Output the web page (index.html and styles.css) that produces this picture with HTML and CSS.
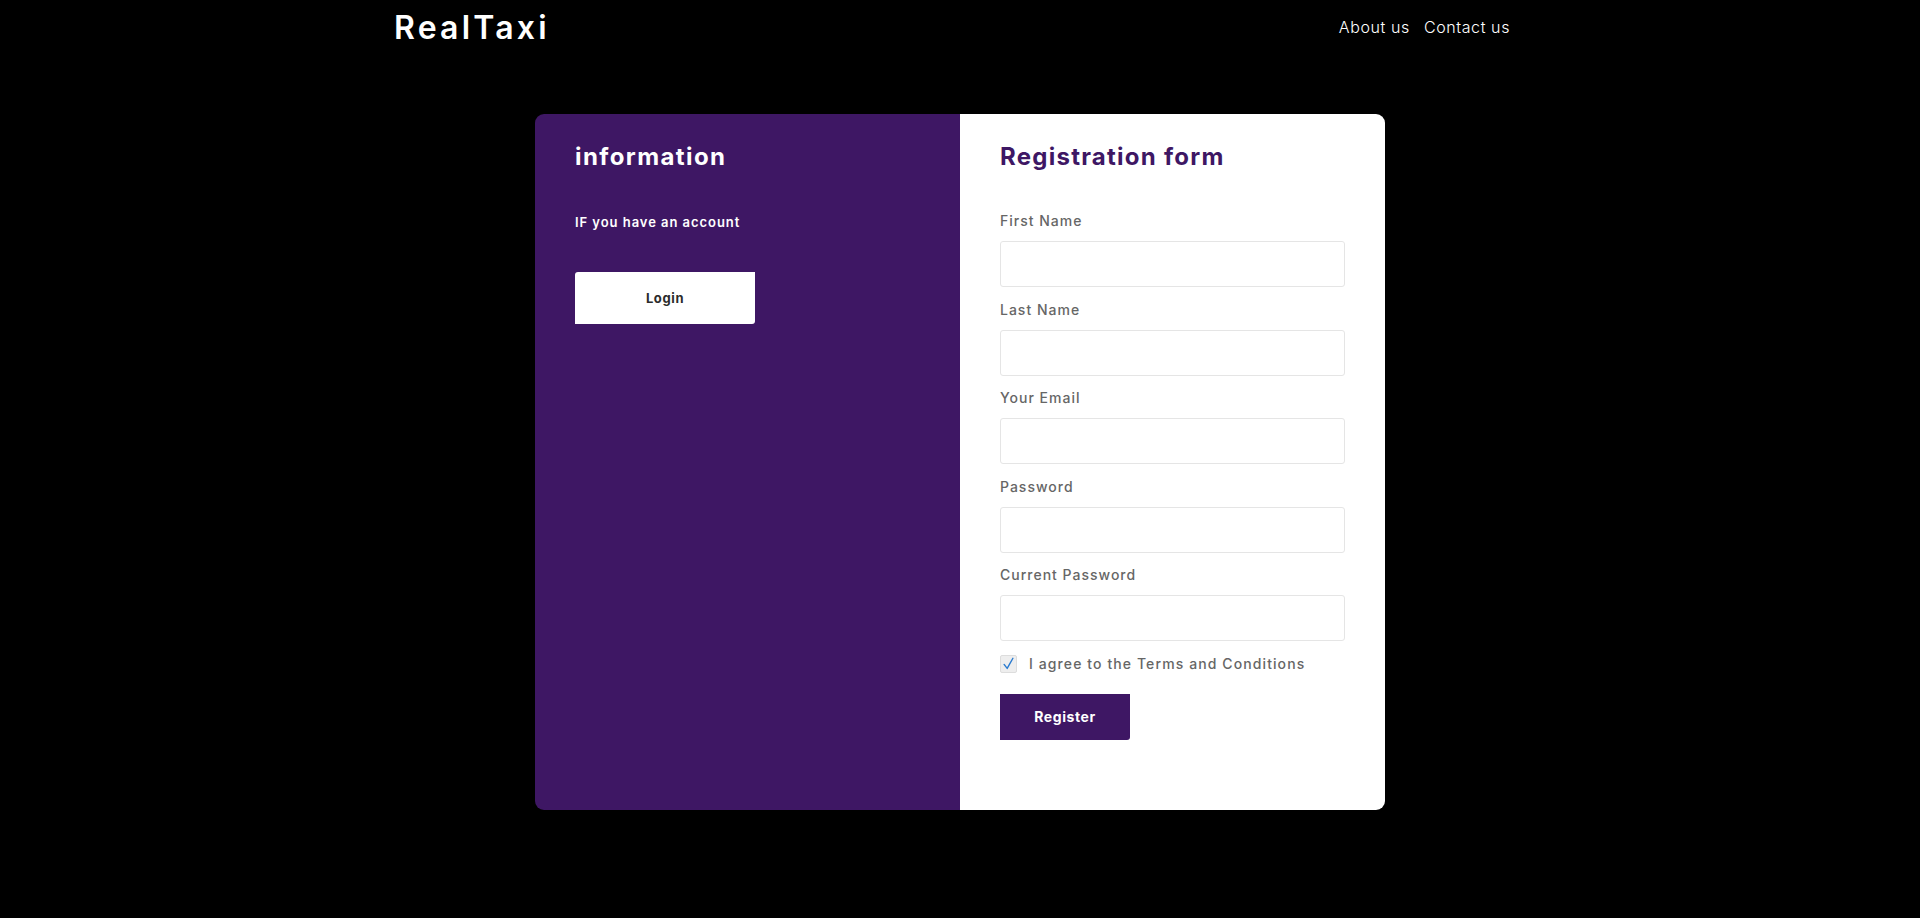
FILE: index.html
```html
<!DOCTYPE html>
<html lang="en">
<head>
<meta charset="utf-8">
<title>RealTaxi - Registration</title>
<link rel="stylesheet" href="styles.css">
</head>
<body>
<header class="navbar">
  <a class="brand" href="#">RealTaxi</a>
  <nav class="nav-links">
    <a href="#">About us</a>
    <a href="#">Contact us</a>
  </nav>
</header>
<main class="card">
  <section class="info">
    <h2 class="info-title">information</h2>
    <p class="info-text">IF you have an account</p>
    <button class="btn-login" type="button">Login</button>
  </section>
  <section class="form-side">
    <h2 class="form-title">Registration form</h2>
    <form class="reg-form">
      <label class="field"><span class="field-label">First Name</span><input class="field-input" type="text"></label>
      <label class="field"><span class="field-label">Last Name</span><input class="field-input" type="text"></label>
      <label class="field"><span class="field-label">Your Email</span><input class="field-input" type="email"></label>
      <label class="field"><span class="field-label">Password</span><input class="field-input" type="password"></label>
      <label class="field"><span class="field-label">Current Password</span><input class="field-input" type="password"></label>
      <div class="agree">
        <span class="checkbox"><svg viewBox="0 0 17 18" width="15" height="16"><path d="M3.5 9.5 L7 14 L13.5 2.5" fill="none" stroke="#2a7bd0" stroke-width="1.6" stroke-linecap="round" stroke-linejoin="round"/></svg></span>
        <span class="agree-text">I agree to the Terms and Conditions</span>
      </div>
      <button class="btn-register" type="button">Register</button>
    </form>
  </section>
</main>
</body>
</html>
```
FILE: styles.css
```css
* { box-sizing: border-box; }
html, body {
  margin: 0;
  background: #000;
  font-family: Inter, "Open Sans", sans-serif;
}
.navbar {
  width: 1130px;
  margin: 0 auto;
  padding: 4px 0 0 0;
  display: flex;
  align-items: center;
  justify-content: space-between;
  height: 50px;
  position: relative;
  left: -3px;
}
.brand {
  color: #fff;
  text-decoration: none;
  font-size: 32px;
  font-weight: 600;
  letter-spacing: 3.2px;
  margin-left: 2px;
}
.nav-links {
  display: flex;
  gap: 14px;
  padding-right: 12px;
}
.nav-links a {
  color: #fff;
  text-decoration: none;
  font-size: 16px;
  font-weight: 300;
  letter-spacing: 0.6px;
}
.card {
  width: 850px;
  margin: 64px auto 0;
  display: grid;
  grid-template-columns: 425px 425px;
  border-radius: 9px;
  overflow: hidden;
}
.info {
  background: #3e1764;
  padding: 28px 40px;
}
.info-title {
  margin: 0;
  color: #fff;
  font-size: 24px;
  font-weight: 700;
  line-height: 30px;
  letter-spacing: 1.4px;
}
.info-text {
  margin: 41px 0 0;
  color: #fff;
  font-size: 13px;
  font-weight: 600;
  line-height: 18px;
  letter-spacing: 0.95px;
}
.btn-login {
  margin-top: 41px;
  width: 180px;
  height: 52px;
  border: none;
  background: #fff;
  color: #2b2b2b;
  font-family: inherit;
  font-size: 13px;
  font-weight: 700;
  letter-spacing: 0.6px;
  border-radius: 3px 0 3px 0;
}
.form-side {
  background: #fff;
  padding: 28px 40px 70px;
}
.form-title {
  margin: 0;
  color: #3e1764;
  font-size: 24px;
  font-weight: 700;
  line-height: 30px;
  letter-spacing: 1.25px;
}
.reg-form {
  margin-top: 39px;
  display: flex;
  flex-direction: column;
}
.field {
  display: flex;
  flex-direction: column;
  margin-bottom: 12.5px;
}
.field-label {
  color: #666;
  font-size: 14px;
  font-weight: 500;
  line-height: 20px;
  letter-spacing: 1px;
  margin-bottom: 10px;
}
.field-input {
  width: 345px;
  height: 46px;
  border: 1px solid #e5e5e5;
  border-radius: 3px;
  background: #fff;
}
.agree {
  display: flex;
  align-items: center;
  gap: 12px;
  margin-top: 1px;
}
.checkbox {
  width: 17px;
  height: 18px;
  border: 1px solid #ddd;
  background: #eeeeee;
  border-radius: 2px;
  display: flex;
  align-items: center;
  justify-content: center;
}
.agree-text {
  color: #666;
  font-size: 14px;
  font-weight: 500;
  letter-spacing: 1.1px;
}
.btn-register {
  margin-top: 21px;
  width: 130px;
  height: 46px;
  border: none;
  background: #3e1764;
  color: #fff;
  font-family: inherit;
  font-size: 14px;
  font-weight: 700;
  letter-spacing: 0.6px;
  border-radius: 0 0 3px 0;
}
```
